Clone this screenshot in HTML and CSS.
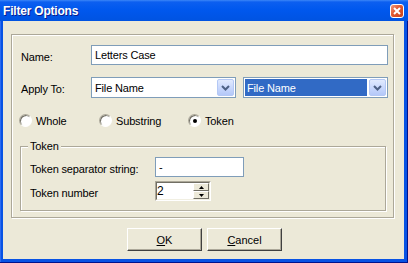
FILE: index.html
```html
<!DOCTYPE html>
<html lang="en">
<head>
    <meta charset="UTF-8">
    <title>Filter Options</title>
    <link rel="stylesheet" href="styles.css">
</head>
<body>
    <div class="window">
        <div class="titlebar">
            <span class="title">Filter Options</span>
            <span class="close">
                <svg width="8" height="8" viewBox="0 0 8 8"><path d="M1 1L7 7M7 1L1 7" stroke="#fff" stroke-width="2" fill="none"/></svg>
            </span>
        </div>
        <div class="client">
            <div class="group">
                <div class="row row-name">
                    <label class="lbl">Name:</label>
                    <div class="edit name-edit">Letters Case</div>
                </div>
                <div class="row row-apply">
                    <label class="lbl">Apply To:</label>
                    <div class="combo">
                        <span class="combo-text">File Name</span>
                        <span class="drop"><svg width="9" height="6" viewBox="0 0 9 6"><path d="M1 1L4.5 4.5L8 1" stroke="#4d6185" stroke-width="2" fill="none"/></svg></span>
                    </div>
                    <div class="combo selected">
                        <span class="combo-text">File Name</span>
                        <span class="drop"><svg width="9" height="6" viewBox="0 0 9 6"><path d="M1 1L4.5 4.5L8 1" stroke="#4d6185" stroke-width="2" fill="none"/></svg></span>
                    </div>
                </div>
                <div class="radios">
                    <span class="radio"><span class="radio-btn"></span>Whole</span>
                    <span class="radio"><span class="radio-btn"></span>Substring</span>
                    <span class="radio"><span class="radio-btn checked"></span>Token</span>
                </div>
                <fieldset class="token-group">
                    <legend>Token</legend>
                    <div class="trow">
                        <span class="tlbl">Token separator string:</span>
                        <div class="edit sep-edit">-</div>
                    </div>
                    <div class="trow">
                        <span class="tlbl">Token number</span>
                        <div class="spin">
                            <div class="spin-inner">
                                <span class="spin-val">2</span>
                                <span class="spin-btns">
                                    <span><svg width="5" height="3" viewBox="0 0 5 3"><path d="M2.5 0L5 3H0Z" fill="#000"/></svg></span>
                                    <span><svg width="5" height="3" viewBox="0 0 5 3"><path d="M0 0H5L2.5 3Z" fill="#000"/></svg></span>
                                </span>
                            </div>
                        </div>
                    </div>
                </fieldset>
            </div>
            <div class="buttons">
                <button type="button"><u>O</u>K</button>
                <button type="button"><u>C</u>ancel</button>
            </div>
        </div>
    </div>
</body>
</html>
```

FILE: styles.css
```css
* {
    box-sizing: border-box;
}
body {
    margin: 0;
    font-family: "Liberation Sans", Arial, sans-serif;
    font-size: 11px;
    letter-spacing: -0.15px;
    color: #000;
}
.window {
    width: 408px;
    height: 263px;
    display: flex;
    flex-direction: column;
    background: #0853e4;
    box-shadow: inset -1px 0 #00138c, inset 0 -1px #00138c, inset 1px 0 #2c6af0;
}
.titlebar {
    height: 21px;
    flex: none;
    display: flex;
    align-items: center;
    justify-content: space-between;
    padding: 0 4px 0 3px;
    background: linear-gradient(#3b86f7 0, #0c5ff0 2px, #0058ee 45%, #0053e1 100%);
}
.title {
    color: #fff;
    font-weight: bold;
    font-size: 12px;
    letter-spacing: -0.2px;
    text-shadow: 1px 1px #0a1c8c;
}
.close {
    width: 14px;
    height: 14px;
    border: 1px solid #fff;
    border-radius: 3px;
    background: linear-gradient(135deg, #f19a7f, #e0572f 45%, #c8421c);
    display: flex;
    align-items: center;
    justify-content: center;
}
.client {
    flex: 1;
    margin: 0 4px 4px 3px;
    background: #ece9d8;
    padding-top: 13px;
}
.group {
    margin-left: 8px;
    width: 383px;
    height: 184px;
    border: 1px solid #aca899;
    box-shadow: inset 1px 1px #fff, 1px 1px #fff;
    padding: 10px 0 0 9px;
}
.row {
    display: flex;
    align-items: center;
}
.row-name {
    height: 20px;
}
.row-apply {
    height: 21px;
    margin-top: 12px;
}
.lbl {
    width: 70px;
    padding-top: 3px;
}
.edit {
    height: 20px;
    border: 1px solid #7f9db9;
    background: #fff;
    padding: 0 3px;
    display: flex;
    align-items: center;
}
.name-edit {
    width: 297px;
}
.combo {
    width: 145px;
    height: 21px;
    border: 1px solid #7f9db9;
    background: #fff;
    padding: 1px;
    display: flex;
}
.combo + .combo {
    margin-left: 7px;
}
.combo-text {
    flex: 1;
    padding-left: 2px;
    display: flex;
    align-items: center;
}
.combo.selected .combo-text {
    background: #316ac5;
    color: #fff;
    margin-right: 2px;
}
.drop {
    width: 17px;
    border: 1px solid #b4c8f5;
    border-radius: 2px;
    background: linear-gradient(#e1eafe, #c5d5fc 60%, #b4c8f8);
    display: flex;
    align-items: center;
    justify-content: center;
}
.radios {
    display: grid;
    grid-template-columns: 80px 89px auto;
    height: 13px;
    margin: 16px 0 0 -2px;
}
.radio {
    display: flex;
    align-items: center;
    gap: 4px;
}
.radio-btn {
    width: 13px;
    height: 13px;
    border-radius: 50%;
    border: 1px solid;
    border-color: #aca899 #fff #fff #aca899;
    background: #fff;
    box-shadow: inset 1px 1px #716f64;
    display: flex;
    align-items: center;
    justify-content: center;
}
.radio-btn.checked::after {
    content: "";
    width: 4px;
    height: 4px;
    border-radius: 50%;
    background: #000;
}
.token-group {
    margin: 13px 0 0 -1px;
    width: 366px;
    min-width: 0;
    border: 1px solid #aca899;
    box-shadow: inset 1px 1px #fff, 1px 1px #fff;
    padding: 0 0 9px 7px;
}
legend {
    padding: 0 2px;
    line-height: 13px;
    background: #ece9d8;
}
.trow {
    display: flex;
    align-items: center;
    margin: 4px 0 0 2px;
}
.tlbl {
    width: 125px;
    padding-top: 3px;
}
.sep-edit {
    width: 89px;
}
.spin {
    width: 56px;
    height: 20px;
    border: 1px solid;
    border-color: #aca899 #fff #fff #aca899;
    display: flex;
}
.spin-inner {
    flex: 1;
    border: 1px solid;
    border-color: #716f64 #f1efe2 #f1efe2 #716f64;
    background: #fff;
    display: flex;
}
.spin-val {
    flex: 1;
    font-size: 12px;
    line-height: 16px;
}
.spin-btns {
    width: 16px;
    display: flex;
    flex-direction: column;
}
.spin-btns span {
    flex: 1;
    background: #ece9d8;
    border: 1px solid;
    border-color: #fff #716f64 #716f64 #fff;
    display: flex;
    align-items: center;
    justify-content: center;
}
.buttons {
    display: flex;
    justify-content: center;
    gap: 5px;
    margin: 10px 0 0 2px;
}
button {
    width: 75px;
    height: 23px;
    padding: 0;
    font: inherit;
    color: #000;
    background: #ece9d8;
    border: 1px solid;
    border-color: #fff #404040 #404040 #fff;
    box-shadow: inset -1px -1px #aca899;
}
```
